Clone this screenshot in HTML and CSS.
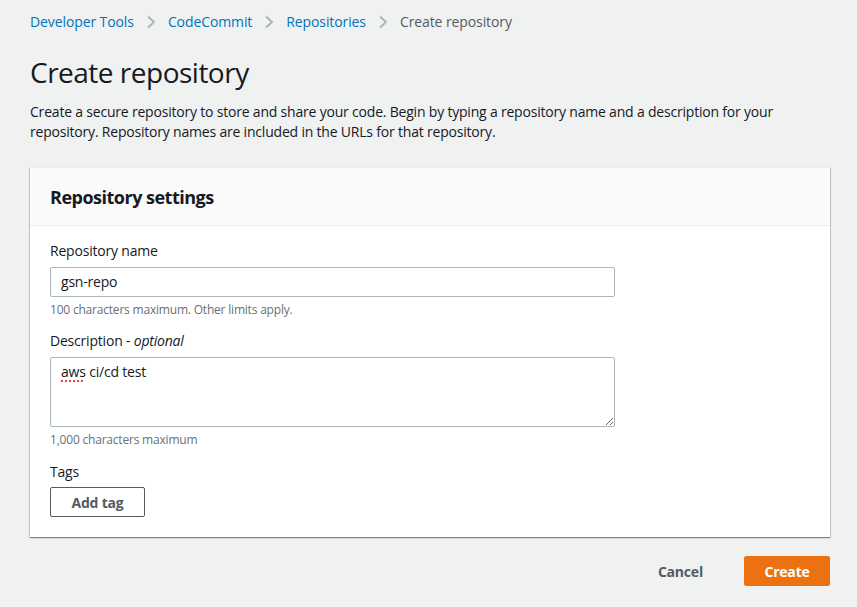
FILE: index.html
```html
<!DOCTYPE html>
<html>
<head>
<meta charset="utf-8">
<link rel="stylesheet" href="styles.css">
</head>
<body>
<div class="page">
  <nav class="crumbs">
    <a class="crumb-link">Developer Tools</a>
    <svg class="chev" width="10" height="14" viewBox="0 0 10 14"><path d="M2 1.5 L8 7 L2 12.5" fill="none" stroke="#aab7b8" stroke-width="2"/></svg>
    <a class="crumb-link">CodeCommit</a>
    <svg class="chev" width="10" height="14" viewBox="0 0 10 14"><path d="M2 1.5 L8 7 L2 12.5" fill="none" stroke="#aab7b8" stroke-width="2"/></svg>
    <a class="crumb-link">Repositories</a>
    <svg class="chev" width="10" height="14" viewBox="0 0 10 14"><path d="M2 1.5 L8 7 L2 12.5" fill="none" stroke="#aab7b8" stroke-width="2"/></svg>
    <span class="crumb-current">Create repository</span>
  </nav>
  <h1 class="title">Create repository</h1>
  <p class="intro">Create a secure repository to store and share your code. Begin by typing a repository name and a description for your repository. Repository names are included in the URLs for that repository.</p>

  <section class="panel">
    <header class="panel-head">
      <h2>Repository settings</h2>
    </header>
    <div class="panel-body">
      <div class="field">
        <label class="label">Repository name</label>
        <div class="input">gsn-repo</div>
        <div class="hint">100 characters maximum. Other limits apply.</div>
      </div>
      <div class="field">
        <label class="label">Description - <i>optional</i></label>
        <div class="textarea"><span class="misspelled">aws</span> ci/cd test</div>
        <div class="hint">1,000 characters maximum</div>
      </div>
      <div class="field field-tags">
        <label class="label">Tags</label>
        <button class="btn-normal">Add tag</button>
      </div>
    </div>
  </section>

  <div class="actions">
    <button class="btn-link">Cancel</button>
    <button class="btn-primary">Create</button>
  </div>
</div>
</body>
</html>
```
FILE: styles.css
```css
* { box-sizing: border-box; }
html, body { margin: 0; padding: 0; }
body {
  background: #f0f1f1;
  font-family: "Open Sans", "Noto Sans", sans-serif;
  color: #16191f;
  font-size: 14px;
  line-height: 20px;
  letter-spacing: -0.2px;
}
.page {
  width: 800px;
  margin-left: 30px;
  padding-top: 12px;
}
.crumbs {
  display: flex;
  align-items: center;
  gap: 12px;
  height: 20px;
  font-size: 14px;
  letter-spacing: -0.1px;
}
.crumb-link { color: #0073bb; }
.crumb-current { color: #545b64; }
.chev { display: block; }
.title {
  margin: 22px 0 0;
  font-size: 28px;
  font-weight: 400;
  line-height: 36px;
  letter-spacing: -0.5px;
  color: #16191f;
}
.intro {
  margin: 12px 0 0;
  font-size: 14px;
  line-height: 20px;
}
.panel {
  margin-top: 25px;
  background: #fff;
  border-top: 1px solid #eaeded;
  box-shadow: 0 1px 1px 0 rgba(0,28,36,.3), 1px 1px 1px 0 rgba(0,28,36,.15), -1px 1px 1px 0 rgba(0,28,36,.15);
}
.panel-head {
  background: #fafafa;
  border-bottom: 1px solid #eaeded;
  height: 58px;
  padding: 0 20px;
  display: flex;
  align-items: center;
}
.panel-head h2 {
  margin: 0;
  font-size: 18px;
  font-weight: 700;
  line-height: 24px;
  letter-spacing: -0.5px;
  color: #16191f;
}
.panel-body {
  padding: 15px 20px 20px;
  display: flex;
  flex-direction: column;
  gap: 13px;
}
.field { display: flex; flex-direction: column; }
.field-tags { margin-top: 1px; }
.field-tags .label { margin-bottom: 5px; }
.label {
  font-size: 14px;
  line-height: 20px;
  margin-bottom: 6px;
  color: #16191f;
}
.input, .textarea {
  width: 565px;
  border: 1px solid #aab7b8;
  border-radius: 2px;
  background: #fff;
  padding: 4px 10px;
  font-size: 14px;
  line-height: 20px;
  color: #16191f;
}
.input { height: 30px; }
.textarea {
  height: 70px;
  padding-top: 4px;
  resize: both;
  overflow: auto;
}
.misspelled {
  text-decoration: underline dotted #e0443a;
  text-underline-offset: 3px;
  text-decoration-thickness: 2px;
}
.hint {
  font-size: 12px;
  line-height: 16px;
  color: #687078;
  margin-top: 5px;
}
.btn-normal {
  align-self: flex-start;
  width: 95px;
  height: 30px;
  background: #fff;
  border: 1px solid #545b64;
  border-radius: 2px;
  font-family: inherit;
  font-size: 14px;
  font-weight: 700;
  letter-spacing: inherit;
  color: #545b64;
  padding: 0;
}
.actions {
  display: flex;
  justify-content: flex-end;
  align-items: center;
  gap: 41px;
  margin-top: 19px;
}
.btn-link {
  background: none;
  border: none;
  font-family: inherit;
  font-size: 14px;
  font-weight: 700;
  letter-spacing: inherit;
  color: #545b64;
  padding: 0;
}
.btn-primary {
  width: 86px;
  height: 30px;
  background: #ec7211;
  border: 1px solid #ec7211;
  border-radius: 2px;
  color: #fff;
  font-family: inherit;
  font-size: 14px;
  font-weight: 700;
  letter-spacing: inherit;
  padding: 0;
}
```
